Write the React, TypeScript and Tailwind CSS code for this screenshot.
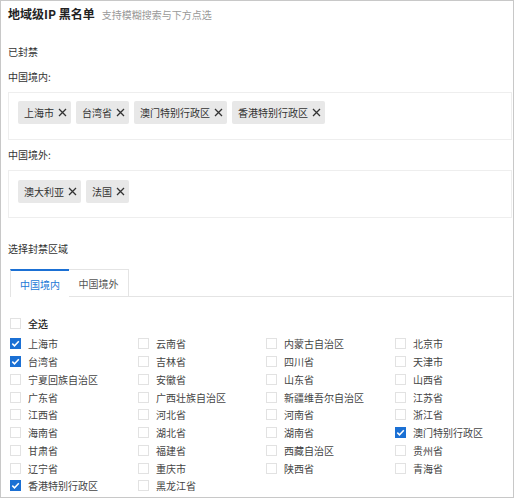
import type { ReactNode } from "react";

const cols: { name: string; checked?: boolean }[][] = [
  [
    { name: "上海市", checked: true },
    { name: "台湾省", checked: true },
    { name: "宁夏回族自治区" },
    { name: "广东省" },
    { name: "江西省" },
    { name: "海南省" },
    { name: "甘肃省" },
    { name: "辽宁省" },
    { name: "香港特别行政区", checked: true },
  ],
  [
    { name: "云南省" },
    { name: "吉林省" },
    { name: "安徽省" },
    { name: "广西壮族自治区" },
    { name: "河北省" },
    { name: "湖北省" },
    { name: "福建省" },
    { name: "重庆市" },
    { name: "黑龙江省" },
  ],
  [
    { name: "内蒙古自治区" },
    { name: "四川省" },
    { name: "山东省" },
    { name: "新疆维吾尔自治区" },
    { name: "河南省" },
    { name: "湖南省" },
    { name: "西藏自治区" },
    { name: "陕西省" },
  ],
  [
    { name: "北京市" },
    { name: "天津市" },
    { name: "山西省" },
    { name: "江苏省" },
    { name: "浙江省" },
    { name: "澳门特别行政区", checked: true },
    { name: "贵州省" },
    { name: "青海省" },
  ],
];

function Tag({ children }: { children: ReactNode }) {
  return (
    <span className="flex h-[23px] items-center gap-[4px] rounded-[2px] bg-[#e8e8e8] pl-[6px] pr-[4px] text-[10px] text-[#333]">
      {children}
      <svg width="9" height="9" viewBox="0 0 9 9" className="shrink-0">
        <path d="M1 1L8 8M8 1L1 8" stroke="#333" strokeWidth="1.3" />
      </svg>
    </span>
  );
}

function Check({ checked }: { checked?: boolean }) {
  if (checked) {
    return (
      <span className="flex h-[11px] w-[11px] shrink-0 items-center justify-center bg-[#1b70d4]">
        <svg width="9" height="9" viewBox="0 0 9 9">
          <path d="M1.3 4.6L3.5 6.8L7.8 2.2" stroke="#fff" strokeWidth="1.5" fill="none" />
        </svg>
      </span>
    );
  }
  return <span className="h-[11px] w-[11px] shrink-0 border border-[#e2e2e2] bg-white" />;
}

export default function App() {
  return (
    <div
      className="h-[498px] w-[514px] border border-[#c8c8c8] bg-white pl-[7px] pr-[1px] pt-[5px] text-[10px] text-[#333]"
      style={{ fontFamily: '"Noto Sans CJK SC", "Noto Sans", sans-serif' }}
    >
      <div className="flex items-baseline gap-[7px] leading-[16px]">
        <span className="text-[12px] font-bold text-[#222]">地域级IP 黑名单</span>
        <span className="text-[10px] text-[#999]">支持模糊搜索与下方点选</span>
      </div>

      <div className="mt-[22px] leading-[14px]">已封禁</div>
      <div className="mt-[11px] leading-[14px]">中国境内:</div>
      <div className="mt-[8px] flex h-[48px] gap-[5px] border border-[#eeeeee] pl-[9px] pt-[8px]">
        <Tag>上海市</Tag>
        <Tag>台湾省</Tag>
        <Tag>澳门特别行政区</Tag>
        <Tag>香港特别行政区</Tag>
      </div>

      <div className="mt-[8px] leading-[14px]">中国境外:</div>
      <div className="mt-[8px] flex h-[48px] gap-[5px] border border-[#eeeeee] pl-[9px] pt-[9px]">
        <Tag>澳大利亚</Tag>
        <Tag>法国</Tag>
      </div>

      <div className="mt-[24px] leading-[14px]">选择封禁区域</div>

      <div className="mt-[13px] flex h-[28px] pl-[2px]">
        <div className="flex w-[59px] items-center justify-center border-l border-t-2 border-[#e4e4e4] border-t-[#1b70d4] text-[#2278d6]">
          中国境内
        </div>
        <div className="flex w-[60px] items-center justify-center border-b border-r border-t border-[#e4e4e4] text-[#555]">
          中国境外
        </div>
        <div className="flex-1 border-b border-[#e4e4e4]" />
      </div>

      <div className="mt-[17px] flex h-[18px] items-center gap-[7px] pl-[2px] font-medium text-[#222]">
        <Check />
        全选
      </div>

      <div className="mt-[3px] grid grid-cols-[128px_128px_129px_1fr] pl-[2px]">
        {cols.map((col, i) => (
          <div key={i} className="flex flex-col">
            {col.map((item) => (
              <div key={item.name} className="flex h-[17.75px] items-center gap-[7px] text-[#444]">
                <Check checked={item.checked} />
                {item.name}
              </div>
            ))}
          </div>
        ))}
      </div>
    </div>
  );
}
